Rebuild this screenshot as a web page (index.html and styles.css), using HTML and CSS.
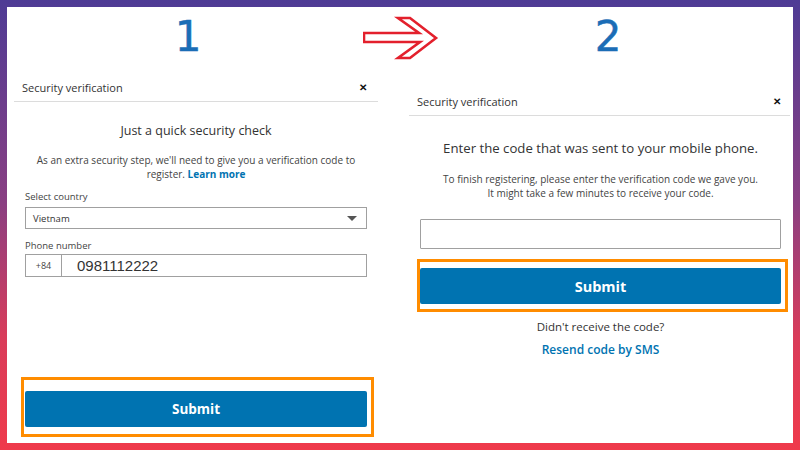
FILE: index.html
```html
<!DOCTYPE html>
<html lang="en">
<head>
  <meta charset="UTF-8">
  <title>Security verification steps</title>
  <link rel="stylesheet" href="styles.css">
</head>
<body>
  <div class="frame">
    <div class="steps">
      <div class="step-num one">1</div>
      <svg class="arrow" width="80" height="60" viewBox="0 0 80 60">
        <polygon points="1,26 56,26 35,11 47,11 73,31 47,51 35,51 57,35 1,35" fill="#fff" stroke="#e3202c" stroke-width="2.6" stroke-linejoin="miter"/>
      </svg>
      <div class="step-num two">2</div>
    </div>

    <div class="panels">
      <section class="dialog first">
        <div class="dialog-head">
          <span>Security verification</span>
          <span class="close">&#x2715;</span>
        </div>
        <div class="dialog-body">
          <h2>Just a quick security check</h2>
          <p class="note"><span>As an extra security step, we'll need to give you a verification code to</span><br><span>register.</span> <a href="#">Learn more</a></p>

          <label class="field-label">Select country</label>
          <div class="select">
            <span>Vietnam</span>
            <span class="caret"></span>
          </div>

          <label class="field-label phone-label">Phone number</label>
          <div class="phone">
            <span class="prefix">+84</span>
            <span class="number">0981112222</span>
          </div>
        </div>
        <div class="highlight bottom">
          <button>Submit</button>
        </div>
      </section>

      <section class="dialog second">
        <div class="dialog-head">
          <span>Security verification</span>
          <span class="close">&#x2715;</span>
        </div>
        <div class="dialog-body">
          <h2 class="big">Enter the code that was sent to your mobile phone.</h2>
          <p class="note">To finish registering, please enter the verification code we gave you.<br>It might take a few minutes to receive your code.</p>
          <div class="code-input"></div>
          <div class="highlight">
            <button class="tall">Submit</button>
          </div>
          <p class="resend">Didn't receive the code?</p>
          <a class="resend-link" href="#">Resend code by SMS</a>
        </div>
      </section>
    </div>
  </div>
</body>
</html>
```

FILE: styles.css
```css
* {
  box-sizing: border-box;
}

body {
  margin: 0;
  width: 800px;
  height: 450px;
  padding: 7px;
  font-family: 'Open Sans', 'Noto Sans', sans-serif;
  color: #333;
  background: linear-gradient(180deg, #4e3b95 0%, #8a3f82 45%, #d93c5a 75%, #ef3a4b 100%);
}

.frame {
  width: 786px;
  height: 436px;
  background: #ffffff;
  overflow: hidden;
}

.steps {
  display: grid;
  grid-template-columns: 356px 80px 350px;
  height: 60px;
}

.step-num {
  font-family: 'DejaVu Sans', sans-serif;
  font-size: 42px;
  line-height: 60px;
  color: #1b6db6;
  text-align: center;
  -webkit-text-stroke: 0.5px #1b6db6;
}

.step-num.one {
  padding-left: 6px;
}

.step-num.two {
  padding-right: 20px;
}

.panels {
  display: flex;
  align-items: flex-start;
}

.dialog {
  background: #fff;
}

.dialog.first {
  margin: 6px 0 0 7px;
  width: 364px;
  height: 370px;
  display: flex;
  flex-direction: column;
}

.dialog.second {
  margin: 20px 0 0 31px;
  width: 381px;
}

.dialog-head {
  height: 29px;
  display: flex;
  align-items: center;
  justify-content: space-between;
  padding: 0 11px 0 8px;
  border-bottom: 1px solid #dcdcdc;
  font-size: 11px;
  color: #333;
}

.second .dialog-head {
  padding-right: 9px;
}

.close {
  font-size: 10px;
  font-weight: bold;
  color: #111;
}

.dialog-body {
  padding: 0 11px;
}

.second .dialog-body {
  padding: 0 9px 0 11px;
}

h2 {
  margin: 20px 0 0;
  font-size: 12.5px;
  line-height: 18px;
  font-weight: normal;
  text-align: center;
  color: #333;
}

h2.big {
  margin-top: 22px;
  font-size: 13.2px;
  line-height: 20px;
}

.note {
  margin: 13px 0 0;
  font-size: 10px;
  line-height: 14px;
  text-align: center;
  color: #444;
}

.second .note {
  margin-top: 14px;
}

.note a {
  color: #0073b1;
  font-weight: bold;
  text-decoration: none;
}

.field-label {
  display: block;
  margin-top: 9px;
  font-size: 9.5px;
  line-height: 14px;
  color: #444;
}

.phone-label {
  margin-top: 10px;
}

.select {
  margin-top: 3px;
  height: 22px;
  border: 1px solid #a0a0a0;
  display: flex;
  align-items: center;
  justify-content: space-between;
  padding: 0 7px;
  font-size: 9.5px;
  color: #333;
}

.caret {
  width: 0;
  height: 0;
  border-left: 5px solid transparent;
  border-right: 5px solid transparent;
  border-top: 5px solid #555;
  margin-right: 2px;
}

.phone {
  margin-top: 1px;
  height: 23px;
  border: 1px solid #a0a0a0;
  display: flex;
  align-items: center;
}

.prefix {
  width: 36px;
  height: 100%;
  border-right: 1px solid #a0a0a0;
  display: flex;
  align-items: center;
  justify-content: center;
  font-size: 9px;
  color: #444;
}

.number {
  padding-left: 15px;
  font-family: 'Liberation Sans', Arial, sans-serif;
  font-size: 15px;
  color: #333;
}

.highlight {
  border: 3px solid #ff8c00;
}

.highlight.bottom {
  margin: auto 4px 6px 7px;
  padding: 11px 4px 7px 1px;
}

.second .highlight {
  margin: 10px -7px 0 -3px;
  padding: 6px 4px 5px 0;
}

button {
  display: block;
  width: 100%;
  height: 36px;
  border: none;
  border-radius: 2px;
  background: #0073b1;
  color: #fff;
  font-family: 'Open Sans', sans-serif;
  font-size: 13.5px;
  font-weight: bold;
}

button.tall {
  font-size: 14.5px;
}

.code-input {
  margin-top: 19px;
  height: 30px;
  border: 1.5px solid #a0a0a0;
  border-radius: 1px;
}

.resend {
  margin: 7px 0 0;
  font-size: 11.5px;
  line-height: 16px;
  text-align: center;
  color: #333;
}

.resend-link {
  display: block;
  margin-top: 7px;
  font-size: 12px;
  line-height: 16px;
  text-align: center;
  color: #0073b1;
  font-weight: 600;
  text-decoration: none;
}
```
